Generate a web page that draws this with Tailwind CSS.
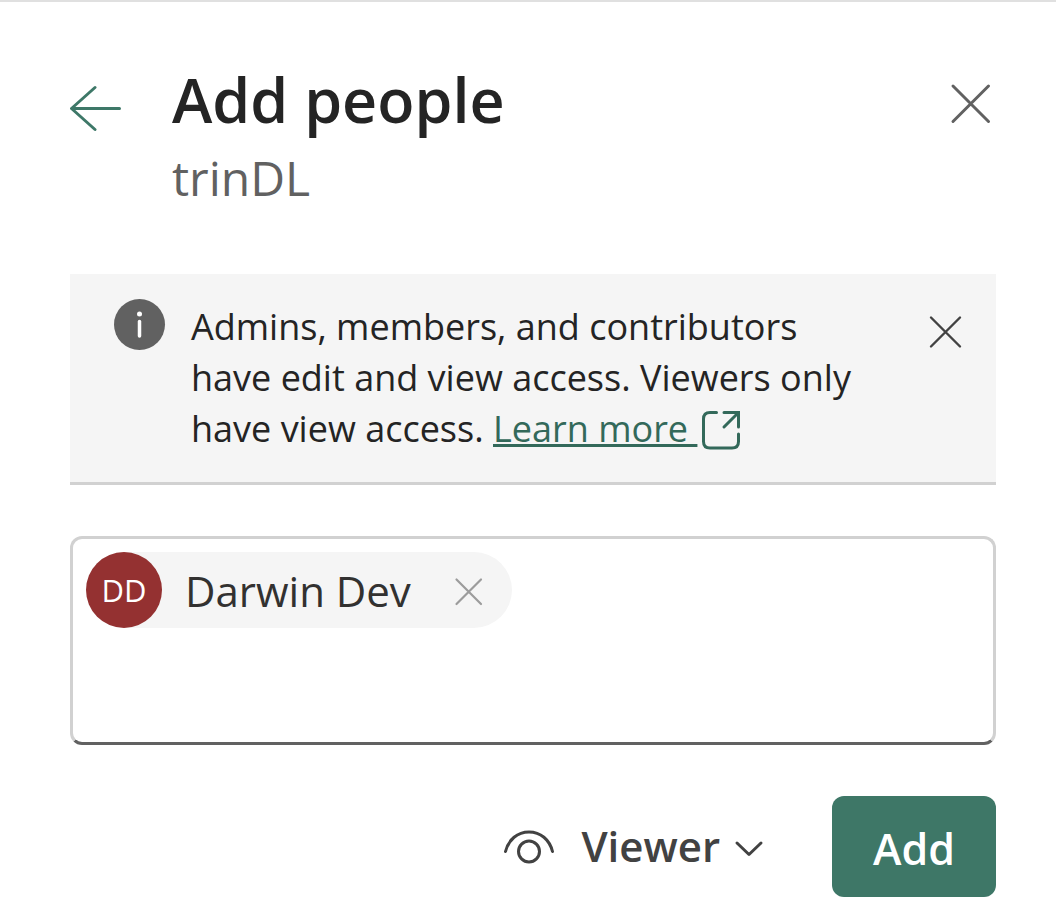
<!DOCTYPE html>
<html lang="en">
<head>
<meta charset="utf-8">
<meta name="viewport" content="width=device-width, initial-scale=1">
<title>Add people</title>
<script src="https://cdn.jsdelivr.net/npm/@tailwindcss/browser@4"></script>
</head>
<body class="min-h-screen bg-white font-['Open_Sans','Noto_Sans',sans-serif] text-[#242424]">
<main class="border-t-2 border-[#e0e0e0] pt-14 pr-[60px] pb-6 pl-[70px]">
  <header class="flex items-start">
    <button type="button" aria-label="Back" class="mt-6 mr-[51px] shrink-0">
      <svg class="h-[52px] w-[51px]" viewBox="0 0 51 52" fill="none" stroke="#3e7868" stroke-width="3" stroke-linecap="round" stroke-linejoin="round"><path d="M49.500 26.500H2M25 5.500L1.500 26.500L25 47.500"/></svg>
    </button>
    <div class="grow">
      <h1 class="text-[61px] leading-[84px] font-semibold">Add people</h1>
      <p class="text-[48px] leading-[72px] text-[#616161]">trinDL</p>
    </div>
    <button type="button" aria-label="Close" class="mt-6 mr-1 shrink-0">
      <svg class="size-[42px]" viewBox="0 0 42 42" fill="none" stroke="#616161" stroke-width="3" stroke-linecap="round"><path d="M3 4L38.500 39.500M38.500 4L3 39.500"/></svg>
    </button>
  </header>

  <section aria-label="Information" class="mt-[60px] flex items-start border-b-[3px] border-[#d1d1d1] bg-[#f5f5f5] pt-[25px] pr-[34px] pb-7 pl-11">
    <svg class="mr-[25px] size-[52px] shrink-0" viewBox="0 0 52 52" aria-hidden="true"><circle cx="25.500" cy="25.500" r="25.500" fill="#616161"/><circle cx="25.500" cy="15" r="2.500" fill="#fff"/><path d="M25.500 22.500V37" stroke="#fff" stroke-width="3.500" stroke-linecap="round"/></svg>
    <p class="grow pt-0.5 pr-12 text-[36px] leading-[51px]">Admins, members, and contributors have edit and view access. Viewers only have view access. <a href="#" class="whitespace-pre text-[#33695a] underline decoration-[3px] underline-offset-[2px]">Learn more <svg class="ml-1 inline-block size-10 align-[-8px]" viewBox="0 0 40 40" fill="none" stroke="#33695a" stroke-width="3" stroke-linecap="round" stroke-linejoin="miter"><path d="M15.500 2.500H9Q2.500 2.500 2.500 9V31.500Q2.500 38 9 38H31Q37.500 38 37.500 31.500V24M23 2.500H37.500V17M37 3L23 17"/></svg></a></p>
    <button type="button" aria-label="Dismiss" class="mt-4 shrink-0">
      <svg class="size-[34px]" viewBox="0 0 34 34" fill="none" stroke="#424242" stroke-width="2.400" stroke-linecap="round"><path d="M3 2.500L32 31.500M32 2.500L3 31.500"/></svg>
    </button>
  </section>

  <div class="mt-[51px] flex min-h-[209px] items-start gap-4 rounded-xl border-[3px] border-[#d1d1d1] border-b-[#616161] p-[13px]">
    <div class="flex h-[76px] shrink-0 items-center rounded-full bg-[#f5f5f5] pr-7">
      <span class="flex size-[76px] items-center justify-center rounded-full bg-[#943131] text-[31px] text-white">DD</span>
      <span class="ml-[23px] pt-0.5 text-[42px] leading-[60px] text-[#323130]">Darwin Dev</span>
      <button type="button" aria-label="Remove Darwin Dev" class="mt-1 ml-[43px]">
        <svg class="size-[30px]" viewBox="0 0 30 30" fill="none" stroke="#9c9c9c" stroke-width="2.200" stroke-linecap="round"><path d="M2.500 2.500L27 27M27 2.500L2.500 27"/></svg>
      </button>
    </div>
    <input type="text" aria-label="Add people by name or email" class="h-[76px] min-w-0 grow text-[42px] outline-none">
  </div>

  <footer class="mt-[51px] flex items-center justify-end">
    <svg class="h-[36px] w-[52px]" viewBox="0 0 52 36" fill="none" stroke="#424242" stroke-width="3" stroke-linecap="round" aria-hidden="true"><path d="M2.500 22.500C5.500 10.500 14.500 3 26 3S46.500 10.500 49.500 22.500"/><circle cx="26" cy="22.500" r="10.500"/></svg>
    <select aria-label="Role" class="field-sizing-content ml-[26px] appearance-none bg-transparent pb-0.5 text-[42px] leading-[60px] font-semibold text-[#424242]"><option>Viewer</option></select>
    <svg class="mt-1 mr-[68px] ml-3.5 h-[18px] w-[30px]" viewBox="0 0 30 18" fill="none" stroke="#424242" stroke-width="3" stroke-linecap="round" stroke-linejoin="round" aria-hidden="true"><path d="M3 3L15 14.500L27 3"/></svg>
    <button type="button" class="rounded-xl bg-[#3e7767] px-[41px] pt-[23px] pb-[18px] text-[43px] leading-[60px] font-semibold text-white">Add</button>
  </footer>
</main>
</body>
</html>
